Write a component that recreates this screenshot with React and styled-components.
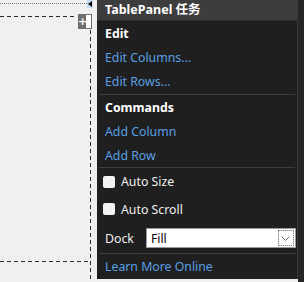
import styled, {createGlobalStyle} from 'styled-components';

const Global = createGlobalStyle`
  html, body {
    margin: 0;
    padding: 0;
    background: #f0f0f0;
  }
  body {
    font-family: "Noto Sans", "Noto Sans CJK SC", sans-serif;
  }
`;

const Stage = styled.div`
  position: relative;
  width: 304px;
  height: 282px;
  overflow: hidden;
  background: #f0f0f0;
`;

const DottedTop = styled.div`
  position: absolute;
  left: 0;
  top: 3px;
  width: 87px;
  border-top: 1px dotted #7a7a7a;
`;

const GlyphTab = styled.div`
  position: absolute;
  left: 87px;
  top: 0;
  width: 6px;
  height: 8px;
  background: #c9def5;
  display: flex;
  align-items: center;
  justify-content: center;
`;

const DashH = styled.div`
  position: absolute;
  left: 0;
  top: ${p => p.top}px;
  width: ${p => p.width}px;
  height: 1px;
  background: repeating-linear-gradient(90deg, #2b2b2b 0 4px, transparent 4px 7px);
`;

const DashV = styled.div`
  position: absolute;
  left: 90px;
  top: ${p => p.top}px;
  bottom: 0;
  width: 1px;
  background: repeating-linear-gradient(180deg, #2b2b2b 0 4px, transparent 4px 7px);
`;

const PlusBox = styled.div`
  position: absolute;
  left: 78px;
  top: 14px;
  height: 15px;
  display: flex;
`;

const PlusPart = styled.div`
  width: 8px;
  background: #6e6e6e;
  color: #fff;
  font: bold 11px/15px "DejaVu Sans", sans-serif;
  text-align: center;
`;

const WhitePart = styled.div`
  width: 5px;
  background: #fff;
  border: 1px solid #6e6e6e;
  border-left: none;
`;

const Panel = styled.div`
  position: absolute;
  left: 97px;
  top: 0;
  width: 200px;
  height: 279px;
  background: #1f1f1f;
  border-right: 1px solid #3a3a3a;
  display: flex;
  flex-direction: column;
  color: #f0f0f0;
  font-size: 12.3px;
`;

const Outside = styled.div`
  position: absolute;
  left: 298px;
  top: 0;
  width: 6px;
  height: 282px;
  background: #262626;
`;

const Header = styled.div`
  height: 21px;
  background: #3d3d3d;
  border-bottom: 1px solid #2c2c2c;
  box-sizing: border-box;
  padding-left: 8px;
  font-weight: bold;
  font-size: 12.5px;
  line-height: 20px;
  color: #fff;
`;

const Row = styled.div`
  height: ${p => p.h || 24}px;
  display: flex;
  align-items: center;
  padding-left: 8px;
  gap: 6px;
  flex-shrink: 0;
`;

const Title = styled.span`
  font-weight: bold;
  color: #fff;
`;

const Link = styled.span`
  color: #5a9fe3;
`;

const Sep = styled.div`
  height: 1px;
  margin: ${p => p.mt || 0}px 2px 0 2px;
  background: #3e3e3e;
  flex-shrink: 0;
`;

const Check = styled.span`
  width: 12px;
  height: 12px;
  border-radius: 2px;
  background: #f3f3f3;
  margin-left: -2px;
  flex-shrink: 0;
`;

const Select = styled.div`
  margin-left: 6px;
  width: 150px;
  height: 20px;
  box-sizing: border-box;
  background: #fff;
  border: 1px solid #9a9a9a;
  display: flex;
  align-items: center;
  color: #000;
  padding: 1px 1px 1px 4px;
`;

const SelectText = styled.span`
  flex: 1;
`;

const SelectButton = styled.span`
  width: 16px;
  height: 16px;
  box-sizing: border-box;
  border: 1px solid #d6d6d6;
  outline: 1px dotted #8a8a8a;
  outline-offset: -1px;
  display: flex;
  align-items: center;
  justify-content: center;
`;

export default function App() {
  return (
    <Stage>
      <Global/>
      <DottedTop/>
      <GlyphTab>
        <svg width="4" height="6" viewBox="0 0 4 6">
          <path d="M4 0 L0 3 L4 6 Z" fill="#000"/>
        </svg>
      </GlyphTab>
      <DashH top={16} width={77}/>
      <PlusBox>
        <PlusPart>+</PlusPart>
        <WhitePart/>
      </PlusBox>
      <DashV top={30}/>
      <DashH top={261} width={90}/>
      <Outside/>
      <Panel>
        <Header>TablePanel 任务</Header>
        <Row><Title>Edit</Title></Row>
        <Row><Link>Edit Columns...</Link></Row>
        <Row><Link>Edit Rows...</Link></Row>
        <Sep mt={1}/>
        <Row><Title>Commands</Title></Row>
        <Row><Link>Add Column</Link></Row>
        <Row><Link>Add Row</Link></Row>
        <Sep/>
        <Row h={27}><Check/><span>Auto Size</span></Row>
        <Row h={28}><Check/><span>Auto Scroll</span></Row>
        <Row h={30}>
          <span>Dock</span>
          <Select>
            <SelectText>Fill</SelectText>
            <SelectButton>
              <svg width="9" height="5" viewBox="0 0 9 5">
                <path d="M0.5 0.5 L4.5 4.5 L8.5 0.5" fill="none" stroke="#6a6a6a" strokeWidth="1"/>
              </svg>
            </SelectButton>
          </Select>
        </Row>
        <Sep/>
        <Row><Link>Learn More Online</Link></Row>
      </Panel>
    </Stage>
  );
}
